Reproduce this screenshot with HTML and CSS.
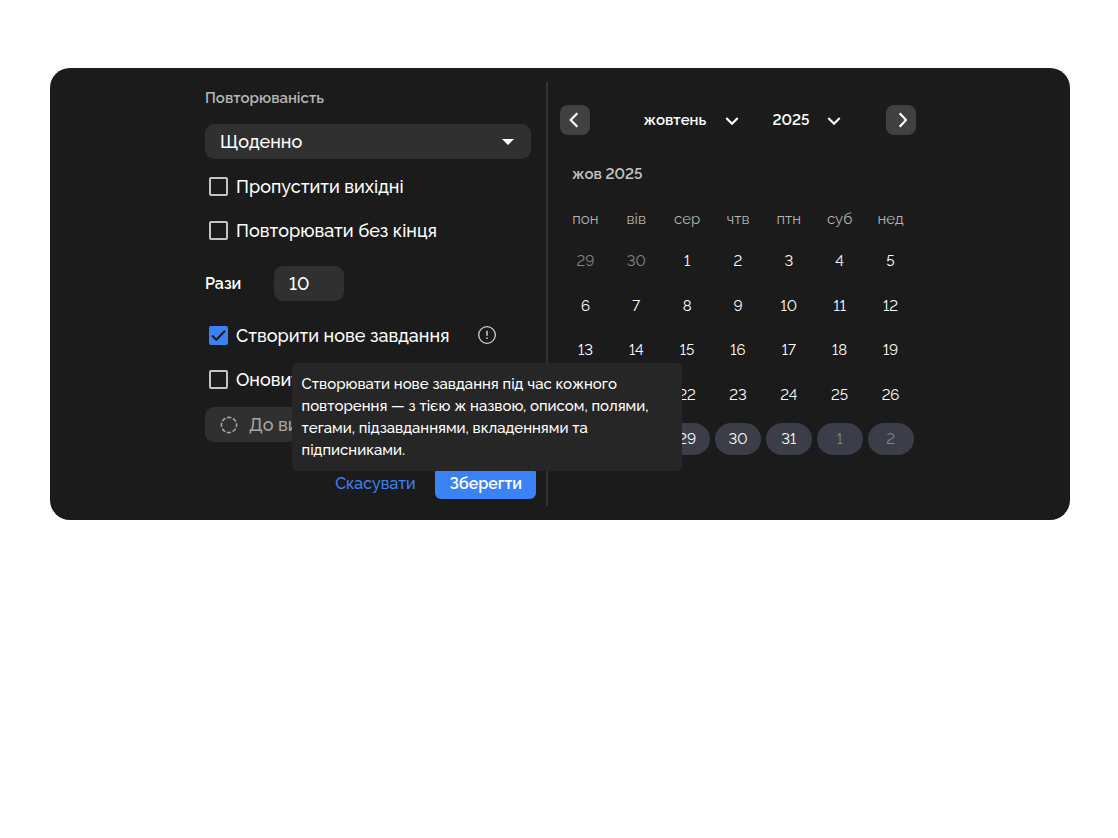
FILE: index.html
```html
<!DOCTYPE html>
<html lang="uk">
<head>
    <meta charset="UTF-8">
    <meta name="viewport" content="width=device-width, initial-scale=1.0">
    <title>Повторюваність</title>
    <link rel="stylesheet" href="styles.css">
</head>
<body>

<main class="card">
    <form class="repeat">
        <label class="caption" for="period">Повторюваність</label>
        <div class="select-box">
            <select id="period" class="field">
                <option>Щоденно</option>
                <option>Щотижня</option>
                <option>Щомісяця</option>
            </select>
            <svg class="caret" width="12" height="6" viewBox="0 0 12 6"><path d="M0 0h12L6 6z" fill="#fff"/></svg>
        </div>

        <label class="check"><input type="checkbox">Пропустити вихідні</label>
        <label class="check"><input type="checkbox">Повторювати без кінця</label>

        <div class="times">
            <label for="times">Рази</label>
            <input id="times" class="field" type="text" value="10">
        </div>

        <div class="check-row">
            <label class="check"><input type="checkbox" checked>Створити нове завдання</label>
            <span class="info">
                <svg width="18" height="18" viewBox="0 0 18 18" fill="none" stroke="#d0d0d0">
                    <circle cx="9" cy="9" r="8.3" stroke-width="1.3"/>
                    <path d="M9 4.8v5M9 11.6v1.4" stroke-width="1.5"/>
                </svg>
                <span class="tooltip" role="tooltip">Створювати нове завдання під час кожного повторення — з тією ж назвою, описом, полями, тегами, підзавданнями, вкладеннями та підписниками.</span>
            </span>
        </div>
        <label class="check"><input type="checkbox">Оновити</label>

        <button type="button" class="field status">
            <svg width="18" height="18" viewBox="0 0 18 18" fill="none" stroke="#a6a6a6" stroke-width="1.6">
                <circle cx="9" cy="9" r="7.6" stroke-dasharray="4.2 1.77" stroke-dashoffset="2.1"/>
            </svg>
            До виконання
        </button>

        <div class="actions">
            <button type="button" class="cancel">Скасувати</button>
            <button type="button" class="save">Зберегти</button>
        </div>
    </form>

    <section class="calendar">
        <div class="nav">
            <button type="button" class="arrow" aria-label="Попередній місяць">
                <svg width="12" height="16" viewBox="0 0 12 16"><path d="M8.3 1.3L1.7 8l6.6 6.7"/></svg>
            </button>
            <div class="pickers">
                <div class="picker month">
                    <select aria-label="Місяць"><option>жовтень</option><option>травень</option></select>
                    <svg width="14" height="10" viewBox="0 0 14 10"><path d="M1.3 2L7 7.7 12.7 2"/></svg>
                </div>
                <div class="picker year">
                    <select aria-label="Рік"><option>2025</option><option>2026</option></select>
                    <svg width="14" height="10" viewBox="0 0 14 10"><path d="M1.3 2L7 7.7 12.7 2"/></svg>
                </div>
            </div>
            <button type="button" class="arrow" aria-label="Наступний місяць">
                <svg width="12" height="16" viewBox="0 0 12 16"><path d="M4.7 1.3L11 8l-6.3 6.7"/></svg>
            </button>
        </div>

        <table class="days">
            <caption>жов 2025</caption>
            <thead>
                <tr><th>пон</th><th>вів</th><th>сер</th><th>чтв</th><th>птн</th><th>суб</th><th>нед</th></tr>
            </thead>
            <tbody>
                <tr>
                    <td class="out"><button>29</button></td><td class="out"><button>30</button></td><td><button>1</button></td><td><button>2</button></td><td><button>3</button></td><td><button>4</button></td><td><button>5</button></td>
                </tr>
                <tr>
                    <td><button>6</button></td><td><button>7</button></td><td><button>8</button></td><td><button>9</button></td><td><button>10</button></td><td><button>11</button></td><td><button>12</button></td>
                </tr>
                <tr>
                    <td><button>13</button></td><td><button>14</button></td><td><button>15</button></td><td><button>16</button></td><td><button>17</button></td><td><button>18</button></td><td><button>19</button></td>
                </tr>
                <tr>
                    <td><button>20</button></td><td><button>21</button></td><td><button>22</button></td><td><button>23</button></td><td><button>24</button></td><td><button>25</button></td><td><button>26</button></td>
                </tr>
                <tr class="week">
                    <td><button>27</button></td><td><button>28</button></td><td><button>29</button></td><td><button>30</button></td><td><button>31</button></td><td class="out"><button>1</button></td><td class="out"><button>2</button></td>
                </tr>
            </tbody>
        </table>
    </section>
</main>

</body>
</html>
```
FILE: styles.css
```css
* { box-sizing: border-box; }
body { margin: 68px 48px 68px 50px; background: #fff; color: #fff; font-family: Raleway, Inter, "Open Sans", sans-serif; font-size: 18px; font-weight: 500; font-variant-numeric: lining-nums; }
button, input, select { font: inherit; font-variant-numeric: lining-nums; color: inherit; margin: 0; border: none; background: none; }
button, select { cursor: pointer; padding: 0; }
select { appearance: none; }
svg { display: block; flex: none; }

.card { display: flex; justify-content: center; padding: 14px 19px 14px 20px; border-radius: 20px; background: #1b1b1b; }

/* left side */
.repeat { display: flex; flex-direction: column; width: 343px; padding: 6px 15px 7px 0; border-right: 2px solid #333; }
.caption { font-size: 15px; font-weight: 600; line-height: 20px; margin-bottom: 16px; color: #b5b5b5; }
.field { height: 35px; border-radius: 9px; background: #303030; padding: 0 15px; }
.select-box { position: relative; margin-bottom: 5px; }
.select-box select { width: 100%; }
.caret { position: absolute; right: 17px; top: 15px; pointer-events: none; }
.check { display: flex; align-items: center; gap: 8px; height: 44px; padding-left: 4px; white-space: nowrap; }
.check input { appearance: none; width: 19px; height: 19px; border: 2px solid #c4c4c4; border-radius: 2px; }
.check input:checked { border: none; background: #3b82f6 url("data:image/svg+xml,%3Csvg xmlns='http://www.w3.org/2000/svg' viewBox='0 0 19 19'%3E%3Cpath d='M3 9.5l4.3 4.3L16 4.8' fill='none' stroke='%231b1b1b' stroke-width='2'/%3E%3C/svg%3E"); }
.times { display: flex; align-items: center; margin: 14px 0 12px; font-size: 16px; font-weight: 600; }
.times label { width: 69px; }
.times input { width: 70px; font-size: 18px; font-weight: 500; }
.check-row { display: flex; align-items: center; gap: 28px; }
.info { position: relative; }
.tooltip { position: absolute; left: 50%; top: 37px; width: 390px; transform: translateX(-50%); padding: 10px; border-radius: 5px; background: #262626; font-size: 15px; line-height: 22px; z-index: 1; }
.status { display: flex; align-items: center; gap: 11px; margin-top: 6px; color: #a6a6a6; }
.actions { display: flex; justify-content: flex-end; gap: 20px; margin: 25px -5px 0 0; font-size: 16px; }
.cancel { color: #3b82f6; }
.save { height: 32px; padding: 0 14px; border-radius: 6px; background: #3b82f6; font-weight: 600; }

/* calendar */
.calendar { width: 368px; padding: 23px 0 36px 12px; }
.nav { display: flex; align-items: center; justify-content: space-between; font-size: 15px; font-weight: 600; }
.nav path { fill: none; stroke: #fff; stroke-width: 2.2; }
.arrow { display: grid; place-items: center; width: 30px; height: 30px; border-radius: 8px; background: #414141; }
.pickers { display: flex; gap: 34px; margin-left: 8px; }
.picker { position: relative; display: flex; align-items: center; }
.picker select { padding-right: 32px; }
.year select { padding-right: 30px; }
.picker svg { position: absolute; right: 0; top: 5px; pointer-events: none; }
.days { width: 100%; margin-top: 29px; border-collapse: collapse; table-layout: fixed; font-size: 15px; font-weight: 400; text-align: center; }
.days caption { padding: 0 12px 18px; text-align: left; font-weight: 600; line-height: 20px; color: #c4c4c4; }
.days th { height: 37px; padding: 0 0 3px; font-weight: 400; color: #b5b5b5; }
.days td { height: 44px; padding: 0; }
.days tr:nth-child(even) td { height: 45px; }
.days button { width: 46px; height: 32px; border-radius: 16px; }
.week button { background: #3b3e48; }
.out { color: #858585; }
```
